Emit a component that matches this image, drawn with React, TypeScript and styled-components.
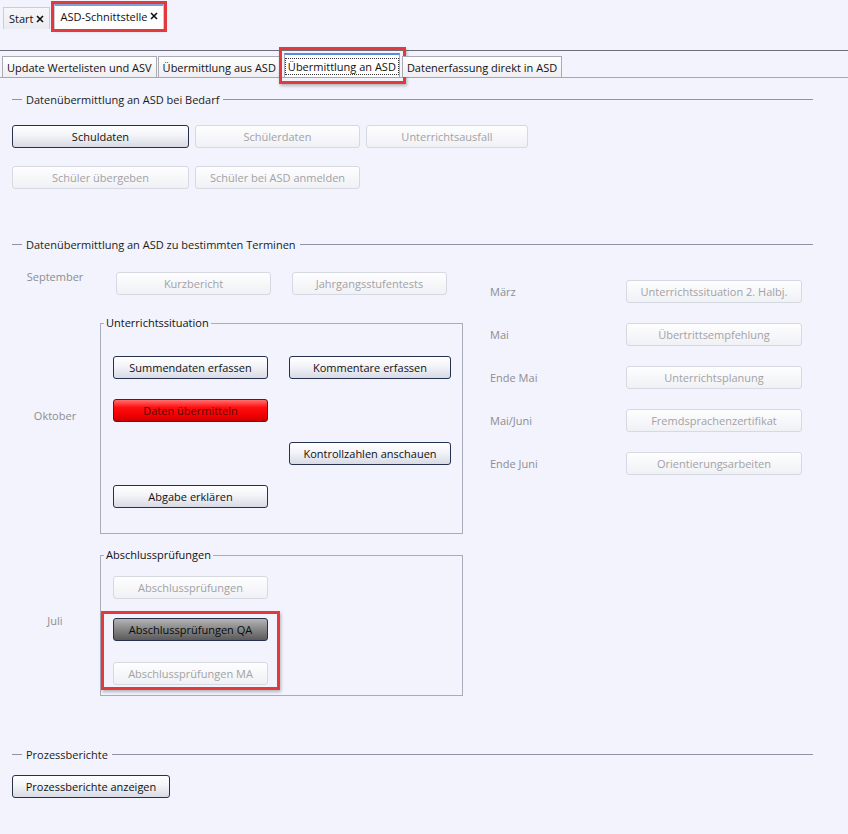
import styled, { createGlobalStyle, css } from 'styled-components';

const GlobalStyle = createGlobalStyle`
  html, body {
    margin: 0;
    padding: 0;
    background: #f2f3fc;
  }
  body {
    font-family: "Open Sans", "Noto Sans", "Liberation Sans", sans-serif;
    font-size: 11px;
    color: #1b1b1b;
  }
`;

const Page = styled.div`
  width: 848px;
  height: 834px;
  overflow: hidden;
  background: #f2f3fc;
`;

/* ---------- document tabs ---------- */

const DocTabs = styled.div`
  height: 30px;
  display: flex;
  align-items: flex-end;
  gap: 4px;
  padding-left: 3px;
  box-sizing: border-box;
  padding-bottom: 1px;
`;

const DocTab = styled.div<{ $active?: boolean }>`
  display: flex;
  align-items: center;
  gap: 3px;
  height: 22px;
  padding: 0 5px 0 5px;
  box-sizing: border-box;
  border: 1px solid #c9cbd6;
  border-bottom: none;
  background: linear-gradient(#f7f7fa, #ebecf2);
  color: #111;
  ${({ $active }) =>
    $active &&
    css`
      height: 25px;
      background: #ffffff;
      border-top: 2px solid #7f9fd8;
      outline: 3px solid #e2393c;
      box-shadow: 1px 2px 3px rgba(0, 0, 0, 0.25);
      padding-bottom: 3px;
    `}
`;

const CloseIcon = () => (
  <svg width="8" height="8" viewBox="0 0 8 8">
    <path d="M1 1 L7 7 M7 1 L1 7" stroke="#111" strokeWidth="1.6" />
  </svg>
);

/* ---------- view tabs ---------- */

const ViewTabs = styled.div`
  margin-top: 20px;
  border-top: 1px solid #6e6f7b;
  border-bottom: 1px solid #a2a6b8;
  height: 26px;
  display: flex;
  align-items: flex-end;
  gap: 1px;
  padding-left: 2px;
`;

const ViewTab = styled.div<{ $active?: boolean }>`
  position: relative;
  height: 21px;
  padding: 0 4px;
  box-sizing: border-box;
  display: flex;
  align-items: center;
  border: 1px solid #a9aab2;
  border-bottom: none;
  background: linear-gradient(#ffffff, #eeeef3);
  color: #111;
  white-space: nowrap;
  ${({ $active }) =>
    $active &&
    css`
      height: 24px;
      margin: 0 1px 0 2px;
      padding: 0 1px;
      background: #ffffff;
      border-top: 2px solid #5b8ad6;
      &::after {
        content: '';
        position: absolute;
        left: -6px;
        right: -7px;
        top: -8px;
        bottom: -7px;
        border: 3px solid #e2393c;
        box-shadow: 1px 2px 3px rgba(0, 0, 0, 0.25);
        pointer-events: none;
      }
    `}
`;

const FocusText = styled.span`
  outline: 1px dotted #333;
  padding: 0 2px;
  line-height: 15px;
`;

/* ---------- content ---------- */

const Content = styled.div`
  padding: 13px 35px 0 12px;
`;

const SectionLegend = styled.div<{ $top?: number }>`
  display: flex;
  align-items: center;
  gap: 4px;
  height: 16px;
  margin-top: ${({ $top }) => $top ?? 0}px;
  white-space: nowrap;

  &::before {
    content: '';
    width: 10px;
    height: 1px;
    background: #8f93a5;
  }
  &::after {
    content: '';
    flex: 1;
    height: 1px;
    background: #8f93a5;
  }
`;

const ButtonRow = styled.div<{ $top: number }>`
  display: flex;
  gap: 6px;
  margin-top: ${({ $top }) => $top}px;
`;

type Variant = 'default' | 'disabled' | 'danger' | 'pressed';

const Button = styled.button<{ $variant?: Variant; $w: number }>`
  width: ${({ $w }) => $w}px;
  height: 23px;
  box-sizing: border-box;
  padding: 0;
  font: inherit;
  border-radius: 3px;
  border: 1px solid #25314e;
  color: #111;
  background: linear-gradient(#ffffff 0%, #f3f4f8 45%, #d8dae5 100%);
  cursor: default;
  white-space: nowrap;

  ${({ $variant }) =>
    $variant === 'disabled' &&
    css`
      border-color: #d7d9e2;
      color: #a2a2a6;
      background: linear-gradient(#fefeff, #f0f1f5);
    `}
  ${({ $variant }) =>
    $variant === 'danger' &&
    css`
      border-color: #4c1e26;
      color: #5e0606;
      background: linear-gradient(#ff7070 0%, #ff1010 35%, #f00000 75%, #c80000 100%);
    `}
  ${({ $variant }) =>
    $variant === 'pressed' &&
    css`
      border-color: #25314e;
      color: #0a0a0a;
      background: linear-gradient(#b4b4b4 0%, #8a8a8a 45%, #5a5a5a 100%);
    `}
`;

const Termine = styled.div`
  display: flex;
  margin-top: 20px;
`;

const LeftColumn = styled.div`
  width: 478px;
  display: flex;
  flex-direction: column;
`;

const DateRow = styled.div<{ $top?: number }>`
  display: flex;
  align-items: flex-start;
  margin-top: ${({ $top }) => $top ?? 0}px;
`;

const MonthLabel = styled.div<{ $offset?: number }>`
  width: 86px;
  margin-right: 2px;
  text-align: center;
  color: #8d8d92;
  line-height: 16px;
  margin-top: ${({ $offset }) => $offset ?? 0}px;
`;

const SeptemberButtons = styled.div`
  display: flex;
  gap: 21px;
  padding-left: 16px;
`;

const Group = styled.fieldset<{ $pad: string }>`
  margin: 0;
  width: 363px;
  box-sizing: border-box;
  min-width: 0;
  border: 1px solid #a9adbb;
  padding: ${({ $pad }) => $pad};
`;

const GroupLegend = styled.legend`
  padding: 0 2px;
  margin-left: -9px;
  line-height: 16px;
  color: #111;
`;

const SituationGrid = styled.div`
  display: grid;
  grid-template-columns: 155px 162px;
  grid-auto-rows: 23px;
  column-gap: 21px;
  row-gap: 20px;
`;

const Stack = styled.div`
  display: flex;
  flex-direction: column;
  align-items: flex-start;
  gap: 19px;
`;

const Highlight = styled.div`
  position: relative;
  display: flex;
  flex-direction: column;
  gap: 21px;

  &::after {
    content: '';
    position: absolute;
    left: -12px;
    top: -7px;
    width: 179px;
    height: 79px;
    border: 3px solid #e2393c;
    box-sizing: border-box;
    box-shadow: 1px 2px 3px rgba(0, 0, 0, 0.25);
    pointer-events: none;
  }
`;

const RightColumn = styled.div`
  padding-top: 8px;
  display: flex;
  flex-direction: column;
  gap: 20px;
`;

const RightRow = styled.div`
  display: flex;
  align-items: center;
  height: 23px;
`;

const RightLabel = styled.div`
  width: 136px;
  color: #8d8d92;
`;

const rightRows = [
  ['März', 'Unterrichtssituation 2. Halbj.'],
  ['Mai', 'Übertrittsempfehlung'],
  ['Ende Mai', 'Unterrichtsplanung'],
  ['Mai/Juni', 'Fremdsprachenzertifikat'],
  ['Ende Juni', 'Orientierungsarbeiten'],
];

export default function App() {
  return (
    <Page>
      <GlobalStyle />
      <DocTabs>
        <DocTab>
          Start <CloseIcon />
        </DocTab>
        <DocTab $active>
          ASD-Schnittstelle <CloseIcon />
        </DocTab>
      </DocTabs>

      <ViewTabs>
        <ViewTab>Update Wertelisten und ASV</ViewTab>
        <ViewTab>Übermittlung aus ASD</ViewTab>
        <ViewTab $active>
          <FocusText>Übermittlung an ASD</FocusText>
        </ViewTab>
        <ViewTab>Datenerfassung direkt in ASD</ViewTab>
      </ViewTabs>

      <Content>
        <SectionLegend>Datenübermittlung an ASD bei Bedarf</SectionLegend>
        <ButtonRow $top={18}>
          <Button $w={177}>Schuldaten</Button>
          <Button $w={165} $variant="disabled">Schülerdaten</Button>
          <Button $w={162} $variant="disabled">Unterrichtsausfall</Button>
        </ButtonRow>
        <ButtonRow $top={18}>
          <Button $w={177} $variant="disabled">Schüler übergeben</Button>
          <Button $w={165} $variant="disabled">Schüler bei ASD anmelden</Button>
        </ButtonRow>

        <SectionLegend $top={47}>Datenübermittlung an ASD zu bestimmten Terminen</SectionLegend>

        <Termine>
          <LeftColumn>
            <DateRow>
              <MonthLabel $offset={-3}>September</MonthLabel>
              <SeptemberButtons>
                <Button $w={155} $variant="disabled">Kurzbericht</Button>
                <Button $w={155} $variant="disabled">Jahrgangsstufentests</Button>
              </SeptemberButtons>
            </DateRow>

            <DateRow $top={20}>
              <MonthLabel $offset={93}>Oktober</MonthLabel>
              <Group $pad="25px 12px 25px 12px">
                <GroupLegend>Unterrichtssituation</GroupLegend>
                <SituationGrid>
                  <Button $w={155}>Summendaten erfassen</Button>
                  <Button $w={162}>Kommentare erfassen</Button>
                  <Button $w={155} $variant="danger">Daten übermitteln</Button>
                  <span />
                  <span />
                  <Button $w={162}>Kontrollzahlen anschauen</Button>
                  <Button $w={155}>Abgabe erklären</Button>
                </SituationGrid>
              </Group>
            </DateRow>

            <DateRow $top={13}>
              <MonthLabel $offset={66}>Juli</MonthLabel>
              <Group $pad="13px 12px 10px 12px">
                <GroupLegend>Abschlussprüfungen</GroupLegend>
                <Stack>
                  <Button $w={155} $variant="disabled">Abschlussprüfungen</Button>
                  <Highlight>
                    <Button $w={155} $variant="pressed">Abschlussprüfungen QA</Button>
                    <Button $w={155} $variant="disabled">Abschlussprüfungen MA</Button>
                  </Highlight>
                </Stack>
              </Group>
            </DateRow>
          </LeftColumn>

          <RightColumn>
            {rightRows.map(([month, label]) => (
              <RightRow key={month}>
                <RightLabel>{month}</RightLabel>
                <Button $w={176} $variant="disabled">{label}</Button>
              </RightRow>
            ))}
          </RightColumn>
        </Termine>

        <SectionLegend $top={50}>Prozessberichte</SectionLegend>
        <ButtonRow $top={13}>
          <Button $w={158}>Prozessberichte anzeigen</Button>
        </ButtonRow>
      </Content>
    </Page>
  );
}
